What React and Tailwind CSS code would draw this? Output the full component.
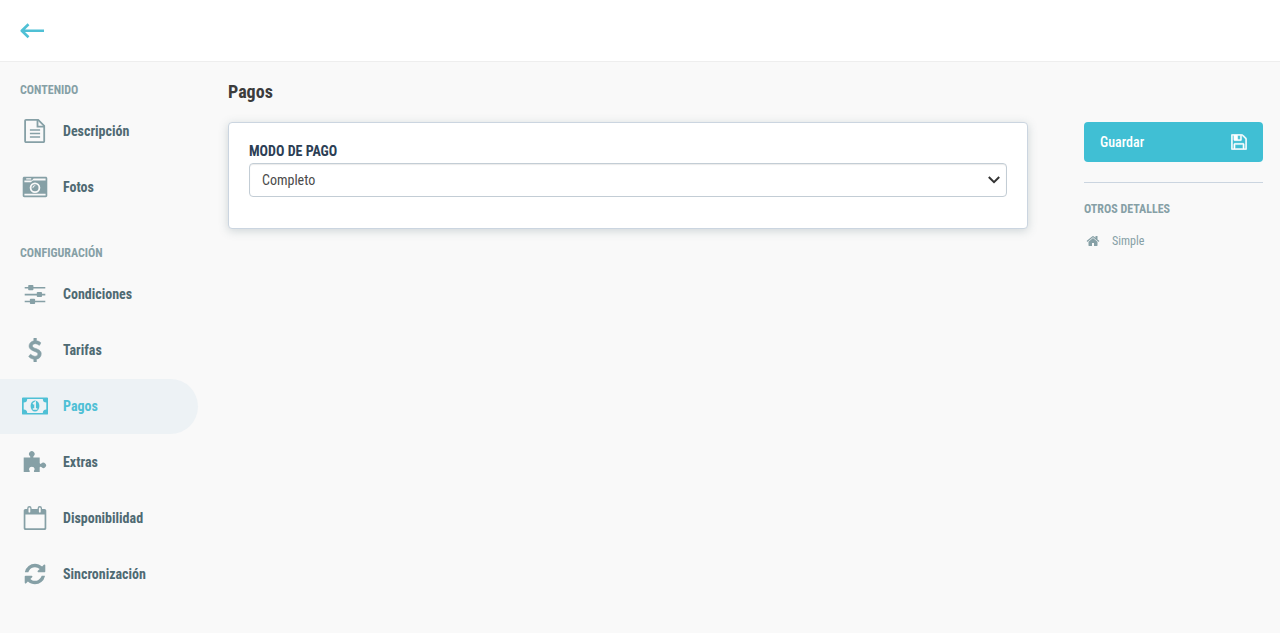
import React, { useState } from "react";
import clsx from "clsx";

const FileIcon = () => (
  <svg viewBox="0 0 24 24" className="h-6 w-6" fill="none" stroke="currentColor">
    <path
      d="M3 .9h12.2l6 6v15.4a.9.9 0 0 1-.9.9H3a.9.9 0 0 1-.9-.9V1.800A.9.9 0 0 1 3 .9z"
      strokeWidth="1.800"
    />
    <path d="M14.500 1v6.700h6.700" strokeWidth="1.800" />
    <path d="M6.900 11h10.200M6.900 14.500h10.200M6.900 18h10.200" strokeWidth="1.600" />
  </svg>
);

const CameraIcon = () => (
  <svg viewBox="0 0 26 24" className="h-6 w-[26px]" fill="currentColor">
    <path
      fillRule="evenodd"
      d="M2.300 1.800h21.400c.9 0 1.600.7 1.600 1.600v17.200c0 .9-.7 1.600-1.600 1.600H2.300c-.9 0-1.600-.7-1.600-1.600V3.400c0-.9.700-1.600 1.600-1.600zM2.400 18.800v1.700h21.200v-1.700zM4.200 3.200v1.300h5V3.200zM2.400 5.400v1.800h6.500l2-1.800h12.700V3.500h-12L9.900 5.400zM13 7.500a5.300 5.300 0 1 0 0 10.600 5.300 5.300 0 0 0 0-10.600z"
    />
    <path
      fillRule="evenodd"
      d="M13 9.300a3.500 3.500 0 1 1 0 7A3.500 3.500 0 0 1 13 9.300zm0 1c-1.500 0-2.500 1.100-2.500 2.500 0 .6.900.6.900 0 0-1 .7-1.600 1.600-1.600.6 0 .6-.9 0-.9z"
    />
  </svg>
);

const SlidersIcon = () => (
  <svg viewBox="0 0 24 24" className="h-6 w-6" fill="currentColor">
    <path d="M1.700 4.900h20.600v1.600H1.700zM1.700 11.800h20.600v1.600H1.700zM1.700 18.700h20.600v1.600H1.700z" />
    <rect x="5.200" y="3" width="5.200" height="5.200" rx=".8" />
    <rect x="13.800" y="9.900" width="5.200" height="5.200" rx=".8" />
    <rect x="6.900" y="16.800" width="5.200" height="5.200" rx=".8" />
  </svg>
);

const DollarIcon = () => (
  <svg
    viewBox="0 0 1792 1792"
    className="h-6 w-6"
    fill="currentColor"
    stroke="currentColor"
    strokeWidth="40"
  >
    <path d="M1362 1185q0 153-99.500 263.500t-258.500 136.500v175q0 14-9 23t-23 9h-135q-13 0-22.500-9.500t-9.500-22.500v-175q-66-9-127.500-31t-101.500-44.500-74-48-46.500-37.500-17.500-18q-17-21-2-41l103-135q7-10 23-12 15-2 24 9l2 2q113 99 243 125 37 8 74 8 81 0 142.500-43t61.500-122q0-28-15-53t-33.500-42-58.500-37.500-66-32-80-32.500q-39-16-61.500-25t-61.500-26.500-62.500-31-56.500-35.500-53.500-42.500-43.500-49-35.500-58-21-66.500-8.500-78q0-138 98-242t255-134v-180q0-13 9.500-22.500t22.500-9.500h135q14 0 23 9t9 23v176q57 6 110.500 23t87 33.500 63.500 37.500 39 29 15 14q17 18 5 38l-81 146q-8 15-23 16-14 3-27-7-3-3-14.500-12t-39-26.500-58.500-32-74.500-26-85.500-11.500q-95 0-155 43t-60 111q0 26 8.500 48t29.500 41.500 39.500 33 56 31 60.500 27 70 27.500q53 20 81 31.500t76 35 75.500 42.500 62 50 53 63.500 31.500 76.500 13 94z" />
  </svg>
);

const MoneyIcon = () => (
  <svg viewBox="0 0 26 24" className="h-6 w-[26px]" fill="currentColor">
    <path
      fillRule="evenodd"
      d="M.9 3.400h24.200c.5 0 .9.400.9.900v15.400c0 .5-.4.900-.9.900H.9c-.5 0-.9-.4-.9-.9V4.300c0-.5.400-.9.900-.9zM5.200 5.100a3.500 3.500 0 0 1-3.500 3.500v6.800a3.500 3.500 0 0 1 3.500 3.500h15.600a3.500 3.500 0 0 1 3.500-3.500V8.600a3.500 3.500 0 0 1-3.500-3.500z"
    />
    <ellipse cx="13" cy="12" rx="4.400" ry="5.600" />
    <path
      d="M11 10l2.100-1.500v6.300M10.800 15h4.500"
      fill="none"
      stroke="#edf2f5"
      strokeWidth="1.700"
    />
  </svg>
);

const PuzzleIcon = () => (
  <svg viewBox="0 0 24 24" className="h-6 w-6" fill="currentColor">
    <path d="M.7 7.600h6.500c.3-.6.100-1.100-.4-1.700a2.800 2.800 0 1 1 4 0c-.5.600-.7 1.100-.4 1.700h6.300v5.500c.1.900.8 1 1.600.5a2.700 2.700 0 1 1 0 3.500c-.8-.5-1.500-.4-1.600.5V22h-5.600c-.6-1 .4-1.800.6-2.900a2.900 2.900 0 0 0-5.700 0c.1 1.100 1.100 1.900.6 2.900H.7z" />
  </svg>
);

const CalendarIcon = () => (
  <svg viewBox="0 0 24 24" className="h-6 w-6" fill="currentColor">
    <path
      fillRule="evenodd"
      d="M2.500 3h1.700V2.300a2.200 2.200 0 0 1 4.400 0V3h6V2.300a2.200 2.200 0 0 1 4.400 0V3h2.500c1 0 1.800.8 1.800 1.800v17.400c0 1-.8 1.800-1.800 1.800h-19c-1 0-1.800-.8-1.800-1.800V4.800C.7 3.800 1.500 3 2.500 3zM2.400 8.400v13.400c0 .3.200.5.500.5h18.200c.3 0 .5-.2.500-.5V8.400zM5.500 2.300v3.400a.9.900 0 0 0 1.800 0V2.300a.9.900 0 0 0-1.800 0zM15.900 2.300v3.400a.9.900 0 0 0 1.800 0V2.300a.9.900 0 0 0-1.800 0z"
    />
  </svg>
);

const RefreshIcon = () => (
  <svg viewBox="0 0 1792 1792" className="h-6 w-6" fill="currentColor">
    <path d="M1639 1056q0 5-1 7-64 268-268 434.500t-478 166.500q-146 0-282.500-55t-243.500-157l-129 129q-19 19-45 19t-45-19-19-45v-448q0-26 19-45t45-19h448q26 0 45 19t19 45-19 45l-137 137q71 66 161 102t187 36q134 0 250-65t186-179q11-17 53-117 8-23 30-23h192q13 0 22.500 9.500t9.500 22.500zm25-800v448q0 26-19 45t-45 19h-448q-26 0-45-19t-19-45 19-45l138-138q-148-137-349-137-134 0-250 65t-186 179q-11 17-53 117-8 23-30 23h-199q-13 0-22.500-9.500t-9.500-22.500v-7q65-268 270-434.500t480-166.500q146 0 284 55.500t245 156.500l130-129q19-19 45-19t45 19 19 45z" />
  </svg>
);

const SaveIcon = () => (
  <svg
    viewBox="108 108 1576 1576"
    className="h-4 w-4"
    fill="currentColor"
    stroke="currentColor"
    strokeWidth="40"
  >
    <path d="M512 1536h768v-384h-768v384zm896 0h128v-896q0-14-10-38.500t-20-34.500l-281-281q-10-10-34-20t-39-10v416q0 40-28 68t-68 28h-576q-40 0-68-28t-28-68v-416h-128v1280h128v-416q0-40 28-68t68-28h832q40 0 68 28t28 68v416zm-384-928v-320q0-13-9.500-22.500t-22.500-9.500h-192q-13 0-22.500 9.500t-9.500 22.500v320q0 13 9.500 22.500t22.500 9.500h192q13 0 22.500-9.500t9.500-22.500zm640 32v928q0 40-28 68t-68 28h-1344q-40 0-68-28t-28-68v-1344q0-40 28-68t68-28h928q40 0 88 20t76 48l280 280q28 28 48 76t20 88z" />
  </svg>
);

const HomeIcon = () => (
  <svg viewBox="0 0 1792 1792" className="h-[14px] w-[14px]" fill="currentColor">
    <path d="M1472 992v480q0 26-19 45t-45 19h-384v-384h-256v384h-384q-26 0-45-19t-19-45v-480q0-1 .5-3t.5-3l575-474 575 474q1 2 1 6zm223-69l-62 74q-8 9-21 11h-3q-13 0-21-7l-692-577-692 577q-12 8-24 7-13-2-21-11l-62-74q-8-10-7-23.500t11-21.500l719-599q32-26 76-26t76 26l244 204v-195q0-14 9-23t23-9h192q14 0 23 9t9 23v408l219 182q10 8 11 21.500t-7 23.500z" />
  </svg>
);

const sections = [
  {
    title: "Contenido",
    items: [
      { label: "Descripción", Icon: FileIcon },
      { label: "Fotos", Icon: CameraIcon },
    ],
  },
  {
    title: "Configuración",
    items: [
      { label: "Condiciones", Icon: SlidersIcon },
      { label: "Tarifas", Icon: DollarIcon },
      { label: "Pagos", Icon: MoneyIcon },
      { label: "Extras", Icon: PuzzleIcon },
      { label: "Disponibilidad", Icon: CalendarIcon },
      { label: "Sincronización", Icon: RefreshIcon },
    ],
  },
];

const headingStyles = "text-xs leading-4 font-bold uppercase text-[#86a0a6]";

const Sidebar = ({ active }) => (
  <nav className="flex w-[198px] shrink-0 flex-col gap-[29px] pt-5">
    {sections.map(({ title, items }) => (
      <div key={title}>
        <h2 className={clsx(headingStyles, "mb-1.5 pl-5")}>{title}</h2>
        <ul>
          {items.map(({ label, Icon }) => (
            <li key={label} className="mb-px">
              <a
                href="#"
                className={clsx(
                  "flex h-[55px] items-center gap-[13px] rounded-r-full pb-px pl-5 text-sm font-bold",
                  label === active
                    ? "bg-[#edf2f5] text-[#4fc0d5]"
                    : "text-[#4f6a73]"
                )}
              >
                <span
                  className={clsx(
                    "flex w-[30px] justify-center",
                    label !== active && "text-[#86a0a6]"
                  )}
                >
                  <Icon />
                </span>
                {label}
              </a>
            </li>
          ))}
        </ul>
      </div>
    ))}
  </nav>
);

const App = () => {
  const [mode, setMode] = useState("completo");

  return (
    <div className="flex min-h-screen flex-col bg-[#f9f9f9] font-['Roboto_Condensed','Roboto',sans-serif] text-[#3c3c3c]">
      <header className="flex h-[62px] items-center border-b border-[#eeeeee] bg-white px-5">
        <a href="#" aria-label="Volver" className="text-[#4fc0d5]">
          <svg
            viewBox="0 0 24 16"
            className="h-4 w-6"
            fill="none"
            stroke="currentColor"
            strokeWidth="2.600"
            strokeLinejoin="round"
          >
            <path d="M24 7.800H1.800M8.500 1.300L1.800 7.800l6.700 6.500" />
          </svg>
        </a>
      </header>

      <div className="flex flex-1">
        <Sidebar active="Pagos" />

        <main className="min-w-0 flex-1 pt-[18px] pl-[30px]">
          <h1 className="mb-[18px] text-lg leading-6 font-bold">Pagos</h1>
          <div className="rounded border border-[#cbd5e0] bg-white px-5 pt-5 pb-[31px] shadow-[0_2px_10px_rgba(79,106,115,0.25)]">
            <label
              htmlFor="mode"
              className="mb-1 block text-sm leading-4 font-bold uppercase text-[#2c3e55]"
            >
              Modo de pago
            </label>
            <div className="grid items-center">
              <select
                id="mode"
                value={mode}
                onChange={(e) => setMode(e.target.value)}
                className="col-start-1 row-start-1 h-[34px] w-full appearance-none rounded border border-[#c3cdd5] bg-white px-3 text-sm text-[#4a4a4a] shadow-[inset_0_1px_1px_rgba(0,0,0,0.08)]"
              >
                <option value="completo">Completo</option>
                <option value="parcial">Parcial</option>
              </select>
              <svg
                viewBox="0 0 12 8"
                className="pointer-events-none col-start-1 row-start-1 mr-[7px] h-2 w-3 justify-self-end"
                fill="none"
                stroke="#333333"
                strokeWidth="2"
              >
                <path d="M.8 1L6 6.200 11.200 1" />
              </svg>
            </div>
          </div>
        </main>

        <aside className="mr-[17px] ml-14 w-[179px] shrink-0 pt-[60px]">
          <button
            type="button"
            className="flex h-10 w-full items-center justify-between rounded bg-[#40bfd4] px-4 text-sm font-medium text-white hover:bg-[#35b0c5]"
          >
            Guardar
            <SaveIcon />
          </button>
          <hr className="mt-5 mb-[18px] border-[#cbd5e0]" />
          <h2 className={headingStyles}>Otros detalles</h2>
          <div className="mt-4 flex items-center gap-3 pl-0.5 text-xs leading-4 text-[#86a0a6]">
            <HomeIcon />
            Simple
          </div>
        </aside>
      </div>
    </div>
  );
};

export default App;
